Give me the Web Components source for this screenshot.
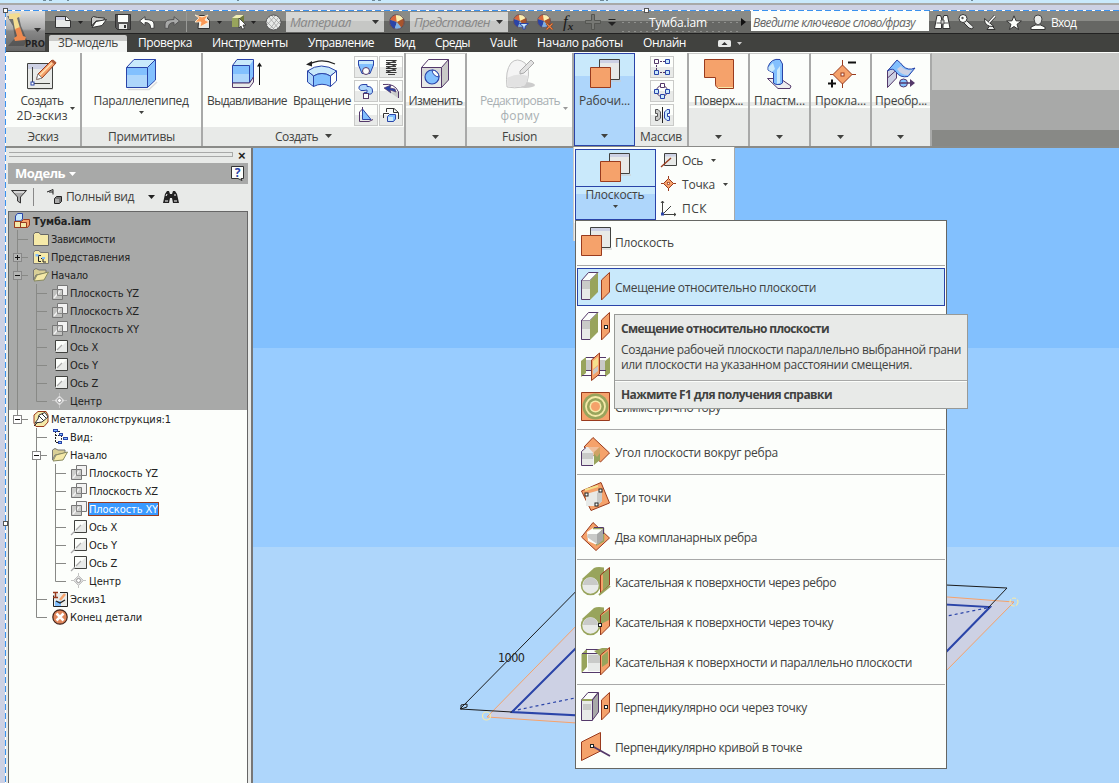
<!DOCTYPE html>
<html lang="ru">
<head>
<meta charset="utf-8">
<title>Тумба.iam</title>
<style>
html,body{margin:0;height:100%;overflow:hidden}
body{font:12px/15px "Open Sans","Noto Sans",sans-serif;color:#41423f;background:#cdd1e4}
</style>
</head>
<body>
<cad-app></cad-app>
<script>
const N='#2a44a8',P='#54396a',O='#f5a26b',B='#993b1e',G='#98a45c',L='#c9e9fb',M='#aed6fb',S='#82c0fe',W='#fcfefb',E='#e8eae8',C='#c9cac8',D='#41423f';

/* Icon library: name -> [width, height, markup] */
const ball=`<circle cx="7" cy="7" r="6.5" fill="#e9c56a"/><path d="M7 7L1 5A6.500 6.500 0 0 1 6 .6z" fill="#d9663a"/><path d="M7 7L6 .6A6.500 6.500 0 0 1 13 4z" fill="#fbeeb0"/><path d="M7 7L1 5A6.500 6.500 0 0 0 5 13.300z" fill="${N}"/><path d="M7 7L5 13.300A6.500 6.500 0 0 0 11 12z" fill="#7db0e8"/><path d="M7 7L11 12A6.500 6.500 0 0 0 13 4z" fill="#a8542c"/><circle cx="7" cy="7" r="6.500" fill="none" stroke="#5a4a5a" stroke-width=".8"/>`;
const cubeSide=`<path d="M1.500 9.500L8.500 1.500H18L10 9.500z" fill="${W}" stroke="${P}"/><path d="M10 9.500L18 1.500V21L10 29z" fill="${G}"/><path d="M1 9.500H10V29H1z" fill="${E}"/><path d="M2 10H10V18H2z" fill="${C}"/><path d="M10 28.500H1.500V9" fill="none" stroke="${P}"/>`;
const fin=`<path d="M21.500 9L29.500 1.500V21L21.500 29z" fill="${O}" stroke="${B}"/>`;
const dot=(x,y)=>`<rect x="${x-1.5}" y="${y-1.5}" width="3" height="3" fill="${W}" stroke="#222"/>`;
const cyl=`<path d="M2 13L14 2Q17 .5 24 1.500V18L16 27z" fill="${G}"/><circle cx="10.500" cy="19.500" r="9" fill="${E}" stroke="${G}" stroke-width="1.500"/><path d="M3 19a7.500 7.500 0 0 1 15 0z" fill="${C}"/>`;
const planes=`<path d="M12 23H32" stroke="#ccc"/><path d="M10.500 1.500H30.500V21.500H10.500z" fill="${E}" stroke="${D}"/><path d="M11 2H30V5H11z" fill="#cdd1e4"/><path d="M1.500 9.500H21.500V29.500H1.500z" fill="${O}" stroke="${B}"/>`;
const fold=c=>`<path d="M.5 14.500V3.500L2 1.500H6L7.500 3.500H15.500V14.500z" fill="#f5e9a8" stroke="${c}"/>`;
const I={
logo:[39,40,`<defs><linearGradient id="a" x2="0" y2="1"><stop stop-color="#ddd"/><stop offset=".45" stop-color="#aaa"/><stop offset=".5" stop-color="#888"/><stop offset="1" stop-color="#666"/></linearGradient></defs><path d="M0 0H39V40H0z" fill="url(#a)"/><path d="M1 5l6 10 2 12-7 8h16l3-6-6-14-2-9" fill="#4b4b4b" opacity=".7"/><path d="M3 3L13 2 15 5 11 7 14 17 9 19 7 8 3 8z" fill="#f3dc90"/><path d="M9 18l5-2 3 9 3 1-1 3-10 1-1-3 3-2z" fill="#ee8a50"/><path d="M28 17h7l-3.500 4z" fill="#333"/>`],
neu:[16,14,`<path d="M.5 1.500H11L15.500 5.500V12.500H.5z" fill="${E}" stroke="#333"/><path d="M1 2h9v3H1z" fill="#cdd1e4"/><path d="M10.500 1.500v4h5" fill="#fff" stroke="#333"/>`],
dn:[5,3,`<path d="M0 0H5L2.500 3z" fill="currentColor"/>`],
dn7:[7,4,`<path d="M0 0H7L3.500 4z" fill="currentColor"/>`],
open:[16,13,`<path d="M.5 10V2l2-1.500 4 1 7 .5-1 3H5z" fill="${C}" stroke="#333"/><path d="M1 11.500L5 5.500 15.500 3.500 11 9.500z" fill="${W}" stroke="#333"/>`],
save:[16,16,`<path d="M.5.5H15.500V15.500H2.500L.5 13.500z" fill="#555" stroke="#333"/><path d="M3 1h10v7H3z" fill="${W}"/><path d="M4 10h8v5H4z" fill="${E}"/><path d="M9 11h2v3H9z" fill="#333"/>`],
undo:[16,13,`<path d="M.5 5L6 .7V3.500Q15 3.500 15 8v4.300H11.500Q12 6.500 6 6.500V9.500z" fill="${W}" stroke="#444"/>`],
redo:[16,13,`<path d="M15.500 5L10 .7V3.500Q1 3.500 1 8v4.300H4.500Q4 6.500 10 6.500V9.500z" fill="#a8a9a8" stroke="#555"/>`],
upd:[17,16,`<path d="M5 1.500h6l4.500 5v8H4z" fill="${E}" stroke="#333"/><path d="M1 1L8 3 14 1 11 6l4 2-9 5 1-5-6 0 4-4z" fill="#fb9a58" stroke="#fff3d8" stroke-width=".8"/>`],
pick:[16,16,`<path d="M1 4L5 1H13L9 4z" fill="#f1edb4"/><path d="M1 4H9V13H1z" fill="#98a45c"/><path d="M9 4L13 1V10L9 13z" fill="#6f7a3c"/><path d="M8 4L15 11H12L13.500 14.500 11 15 10 12 8 14z" fill="#fff" stroke="#333" stroke-width=".8"/>`],
sph:[17,17,`<circle cx="8.500" cy="8.500" r="7.500" fill="${E}" stroke="#555"/><path d="M4 3L13 14M2 8L9 15M7 2L15 10M13 4L5 15M2 11L10 2M8 15L15 7" stroke="#999" stroke-width=".7"/>`],
ball:[16,16,`<g transform="scale(1.130)">${ball}</g>`],
ballf:[16,16,`${ball}<path d="M6.500 9.500H15.500L12 12.500V15H10V12.500z" fill="${L}" stroke="${N}"/>`],
ballx:[17,16,`${ball}<path d="M9.500 9.500L15.500 15.500M15.500 9.500L9.500 15.500" stroke="#5a3a2a" stroke-width="2.400"/><path d="M9.500 9.500L15.500 15.500M15.500 9.500L9.500 15.500" stroke="#f08040" stroke-width="1.300"/>`],
plus:[16,16,`<path d="M6.500 .5H9.500V6.500H15.500V9.500H9.500V15.500H6.500V9.500H.5V6.500H6.500z" fill="#777874" stroke="#555652"/>`],
cust:[8,7,`<path d="M.5.5H7.500" stroke="#222"/><path d="M0 3H8L4 7z" fill="#222"/>`],
rt:[5,8,`<path d="M0 0V8L5 4z" fill="#111"/>`],
bino:[17,16,`<path d="M.5 14.500L2.500 4 3 1.500H6.500L7.500 4V14.500zM9 14.500V4L10 1.500H13.500L14 4 16 14.500z" fill="${W}" stroke="#333"/><path d="M7 6h3v4H7zM2.500 9H7M10 9H14.500" fill="${C}" stroke="#555"/>`],
key:[17,16,`<path d="M8 6L15.500 13 14 15 11 14 6 9" fill="${E}" stroke="#333"/><circle cx="5" cy="4.500" r="4" fill="${W}" stroke="#333"/><circle cx="4.500" cy="4" r="1.200" fill="#555"/>`],
dish:[14,16,`<path d="M4 15.500H12L8 10z" fill="${E}" stroke="#333"/><path d="M1.500 4.500Q1 13 11 12.500z" fill="${W}" stroke="#333"/><path d="M6 8.500L12 2" stroke="#333" stroke-width="2.600"/><path d="M6 8.500L12 2" stroke="#fff" stroke-width="1.400"/>`],
star:[16,15,`<path d="M8 .8L10 5.800 15.400 6 11 9.300 12.600 14.500 8 11.500 3.400 14.500 5 9.300.6 6 6 5.800z" fill="${W}" stroke="#333"/>`],
user:[16,16,`<path d="M1 15.500V13L5.500 11H10.500L15 13V15.500z" fill="${W}" stroke="#333"/><path d="M4 5a4 4 0 0 1 8 0q0 5-4 6-4-1-4-6z" fill="${E}" stroke="#444"/>`],
min:[13,7,`<rect width="13" height="7" rx="1.500" fill="${E}"/><path d="M3.500 5H9.500L6.500 2z" fill="#333"/>`],
sketch:[32,32,`<path d="M2 31.500H27" stroke="#ddd"/><path d="M1.500 5.500H26.500V30.500H1.500z" fill="${E}" stroke="${D}"/><path d="M2 6h24v5H2z" fill="#cdd1e4"/><path d="M6.500 9V25.500H24" fill="none" stroke="${D}"/><rect x="5" y="24" width="3" height="3" fill="#fff" stroke="${N}"/><path d="M10.500 21.500L12 16 26 2 30 5 16 20z" fill="${O}" stroke="${B}"/><path d="M10.500 21.500L12 16 16 20z" fill="#fff" stroke="#888"/><path d="M25 3L27 1.500 30.500 4.500 28.500 6.500z" fill="#b05a3a"/><path d="M14 17L26 5" stroke="#ffe3b8" stroke-width="1.500"/>`],
box:[32,32,`<path d="M3 31.500H24L32 24" stroke="#ddd" fill="none" stroke-width="1.500"/><path d="M1.500 9.500L9 1.500H30.500L22.500 9.500z" fill="${L}"/><path d="M1.500 9.500H22.500V30H1.500z" fill="${M}"/><path d="M2 17H22V10H2z" fill="${S}"/><path d="M22.500 9.500L30.500 1.500V22L22.500 29.500z" fill="${S}"/><path d="M1.500 9.500L9 1.500H30.500V22L22.500 29.500H1.500zM1.500 9.500H22.500L30.500 1.500M22.500 9.500V29.500" fill="none" stroke="${N}"/>`],
extr:[32,32,`<path d="M1.500 7.500L6 1.500H22.500L18.500 7.500z" fill="${L}"/><path d="M1.500 7.500H18.500V25H1.500z" fill="${M}"/><path d="M2 8H18V16H2z" fill="${S}"/><path d="M18.500 7.500L22.500 1.500V19L18.500 25z" fill="${S}"/><path d="M1.500 25V7.500L6 1.500H22.500V19L18.500 25zM1.500 7.500H18.500V25" fill="none" stroke="${N}"/><path d="M1.500 25H18.500L22.500 19V24L18.500 29.500H1.500z" fill="${E}" stroke="${P}"/><path d="M28.500 27V6" stroke="#111"/><path d="M26 8.500L28.500 4.500 31 8.500z" fill="#111"/>`],
rev:[32,32,`<path d="M3 6.500Q15-.5 29 6" fill="none" stroke="#222" stroke-width="1.200"/><path d="M0 6.500L6 3V8.500z" fill="#222"/><path d="M1.500 13Q15 3 30.500 13L24.500 18Q16 13 7.500 18z" fill="${L}" stroke="${N}"/><path d="M1.500 13L7.500 18V28.500L1.500 24z" fill="${M}" stroke="${N}"/><path d="M7.500 18Q16 13 24.500 18V28.500Q16 24 7.500 28.500z" fill="${S}" stroke="${N}"/><path d="M24.500 18L30.500 13V23L24.500 28.500z" fill="${W}" stroke="${N}"/>`],
hole:[32,32,`<path d="M1.500 9.500L8.500 1.500H28.500L21.500 9.500z" fill="${W}"/><path d="M1.500 9.500H21.500V29.500H1.500z" fill="${E}"/><path d="M2 10H21V18H2z" fill="#d8d9d8"/><path d="M21.500 9.500L28.500 1.500V22L21.500 29.500z" fill="${C}"/><path d="M1.500 9.500H21.500V29.500H1.500zL8.500 1.500H28.500V22L21.500 29.500M21.500 9.500L28.500 1.500" fill="none" stroke="${P}"/><circle cx="12" cy="19" r="7" fill="${S}" stroke="${N}" stroke-width="1.200"/><path d="M12 12a7 7 0 0 1 7 7 8 8 0 0 1-7-7z" fill="${W}" stroke="${N}"/>`],
form:[32,32,`<ellipse cx="21" cy="27" rx="10" ry="3" fill="#ccc"/><path d="M3 29Q1 13 7 5 13-1 21 5 27 12 23 24 20 32 3 29z" fill="#f4f4f4" stroke="#c4c4c4"/><path d="M3 20Q14 14 24 18 23 26 20 28 10 30 4 28z" fill="#e2e2e2"/><path d="M16 13L27 2 30 5 20 15 16 16z" fill="#e2e2e2" stroke="#aaa"/>`],
planes:[32,32,planes],
patch:[32,32,`<path d="M1.500 1.500H30.500V30.500H16Q12 29 12.500 25V19.500H1.500z" fill="${O}" stroke="${B}"/><path d="M15 29.500H30" stroke="#f5e9a8"/>`],
plast:[30,32,`<path d="M2.500 20.500H15L26 28 25 30.500H13z" fill="#eee" stroke="${P}"/><path d="M3 9Q6 0 15 1.500L17.500 6V25L15 26.500Q10 27 8.500 25V15L3 12z" fill="${S}" stroke="${N}"/><path d="M3.500 9L8 5 10 11 7 14 3.500 12zM12 12L15 8V25L12 26z" fill="${L}"/>`],
gask:[32,32,`<path d="M17.500 2V30M5 16.500H31" stroke="${B}"/><path d="M17.500 7L27 16.500 17.500 26 8 16.500z" fill="${O}" stroke="${B}"/><rect x="16" y="15" width="3" height="3" fill="#fff" stroke="${B}"/><path d="M23 4.500H31M3 25.500H11M7 21.500V29.500" stroke="#111" stroke-width="2"/>`],
conv:[32,32,`<path d="M2.500 13L11.500 3V20L2.500 29.500z" fill="#cdd1e4" stroke="${P}"/><path d="M11.500 12L2.500 20" stroke="${P}" fill="none"/><path d="M2.500 13L12 2Q16 5 18 8 23 13 30 10L23 18.500Q15 20 11 14 8 9 2.500 13z" fill="${S}" stroke="${N}"/><path d="M16 8Q19 13 27 12L23 17Q16 17 12 11z" fill="#cdd1e4"/><circle cx="18.500" cy="25" r="4" fill="${S}" stroke="${P}"/><path d="M14 25H26" stroke="${P}" stroke-width="1.500"/><path d="M25 21V29L30 25z" fill="${P}"/>`],
loft:[16,16,`<path d="M.5 1.500H15.500V6L12 14.500H4L.5 6z" fill="${S}" stroke="${N}"/><path d="M1 2H15V5H1z" fill="${L}"/><circle cx="8" cy="12" r="3.500" fill="${W}" stroke="${P}"/>`],
coil:[16,16,`<path d="M3 1.500H13.500L3 5.500H13.500L3 9.500H13.500L3 13.500H13.500" fill="none" stroke="#333" stroke-width="1.100"/><path d="M3 3.500H13M3 7.500H13M3 11.500H13M5 15.500H12" stroke="#444"/>`],
sweep:[16,16,`<path d="M5 1.500Q.5 2 1 5.500 2 8.500 6 7.500L9 7V9.500Q4.500 9 5.500 12V14.500H10V11Q14.500 12 14.500 8 14.500 3 9 3.500V1.500z" fill="${M}" stroke="${N}"/><rect x="5.500" y="10.500" width="5" height="5" fill="${W}" stroke="${P}"/>`],
emb:[16,16,`<path d="M0 1.500Q12 0 15.500 9V15" stroke="${P}" fill="none"/><path d="M8 10L15 8V15z" fill="${C}"/><path d="M1 5L8 2 7 5 12 6 13 9 7 7 8 10z" fill="${N}" stroke="${P}" stroke-width=".7"/>`],
rib:[16,16,`<path d="M4.500 2L13 12.500H4.500z" fill="${S}" stroke="${N}"/><path d="M4.500 0V2L1.500 5V14.500H11L15 12.500" fill="none" stroke="${P}"/>`],
der:[16,16,`<path d="M3.500 5V1.500H11L15.500 5.500V12M.5 11V6.500H6" fill="none" stroke="#333"/><path d="M10.500 1.500V5.500H15" fill="none" stroke="#333"/><path d="M4.500 9.500L6.500 7.500H12.500V12L10.500 14.500H4.500z" fill="${S}" stroke="${N}"/><path d="M5 10H10V14H5z" fill="${L}"/>`],
prect:[16,16,`<path d="M3 2.500H13M2.500 3V13M3 13.500H13" stroke="${P}" stroke-dasharray="2 1"/><g fill="${L}" stroke="${N}"><path d="M11.500.5h4v4h-4zM.5 11.500h4v4H.5zM11.500 11.500h4v4h-4z"/></g><path d="M.5.5h4v4H.5z" fill="#fff" stroke="${P}"/>`],
pcirc:[16,16,`<circle cx="8" cy="8" r="5.500" fill="none" stroke="${P}"/><g fill="${L}" stroke="${N}"><path d="M.5 6.500h4v4h-4zM11.500 6.500h4v4h-4zM6.500 11.500h4v4h-4z"/></g><path d="M6.500.5h4v4h-4z" fill="#fff" stroke="${P}"/>`],
pmir:[16,16,`<path d="M8.500 0V16" stroke="#222"/><path d="M1.500 2.500H4L6.500 5V11L4 13.500H1.500V9.500H3.500V6.500H1.500z" fill="${C}" stroke="#555"/><path d="M15.500 2.500H13L10.500 5V11L13 13.500H15.500V9.500H13.500V6.500H15.500z" fill="${L}" stroke="${N}"/>`],
axis:[16,16,`<path d="M3.500 1.500H15.500V13.500H3.500z" fill="${E}" stroke="${D}"/><path d="M4 2h11v2.500H4z" fill="#cdd1e4"/><path d="M0 15L10 6" stroke="${B}" stroke-width="1.400"/>`],
point:[16,16,`<path d="M7.500 0V15M0 7.500H15" stroke="${B}"/><path d="M7.500 2.500L12.500 7.500 7.500 12.500 2.500 7.500z" fill="${O}" stroke="${B}"/><rect x="6.500" y="6.500" width="2" height="2" fill="#fff" stroke="${B}" stroke-width=".7"/>`],
ucs:[16,16,`<path d="M1.500 14V1M1.500 14.500H15M2 14L10 6M0 3L1.500 1 3 3M13 13L15 14.500 13 16" stroke="${D}" fill="none"/><rect x=".5" y="13" width="2" height="2" fill="${S}" stroke="${N}"/>`],
off:[32,32,cubeSide+fin],
par:[32,32,cubeSide+fin+dot(26,16)],
mid:[32,32,`<path d="M1 10L6 6V22L1 26zM25 10L30 6V22L25 26z" fill="${G}"/><path d="M6 6.500H26M2 24.500H26M6 19.500H26" stroke="${P}"/><path d="M6 9H25V19H6z" fill="${C}"/><path d="M11.500 9L19.500 2V23L11.500 29.500z" fill="${O}" stroke="${B}"/><path d="M13 10L18 6V14L13 18z" fill="#f5e08c"/><path d="M13 19L18 15V20L13 24z" fill="${C}"/>`],
torus:[32,32,`<path d="M1.500 1.500H29.500V29.500H1.500z" fill="${O}" stroke="${B}"/><circle cx="15.500" cy="15.500" r="13" fill="${G}"/><circle cx="15.500" cy="15.500" r="9.500" fill="none" stroke="#f5e9a8" stroke-width="1.800"/><circle cx="15.500" cy="15.500" r="6" fill="#f5e9a8"/><circle cx="15.500" cy="15.500" r="4.500" fill="${O}"/>`],
ang:[32,32,`<path d="M13 1.500L29.500 17 20.500 26 4 11z" fill="${O}" stroke="${B}"/><path d="M1 16L6 11H19L14 17z" fill="${E}"/><path d="M14 16L20 11V24L14 29z" fill="${G}"/><path d="M1.500 15.500H13.500V29.500H1.500z" fill="${E}"/><path d="M2 17H13V23H2z" fill="${C}"/><path d="M6 11.500L1.500 15.500V29.500H13" fill="none" stroke="${P}"/><path d="M8 11L17 21L20 17V11z" fill="${O}" opacity=".6"/>`],
three:[32,32,`<path d="M1.500 10L21 1.500 29.500 22 11 29.500z" fill="${O}" stroke="${B}"/><path d="M6 13L20 9 22 20 17 25H6z" fill="${E}"/><path d="M17 12L22 9V20L17 25z" fill="${C}"/><path d="M5 9L18 5" stroke="#f5e08c" stroke-width="2"/>${dot(6.5,13.5)+dot(20.5,9.5)+dot(16.5,23.5)}`],
two:[32,32,`<path d="M13 1.500L29.500 17 16 29.500 1.500 16z" fill="${O}" stroke="${B}"/><path d="M7 11L13 7H24L19 12 17 24 8 20z" fill="${W}"/><path d="M13 7.500H23.500V20L16 24" stroke="${G}" fill="none" stroke-width="1.500"/><path d="M17 13L23 8V19L17 24z" fill="#a8a9a8"/><path d="M8 13H17V23L7 16z" fill="${C}"/><path d="M14 6.500H23.500V13" stroke="${P}" fill="none"/>`],
tan1:[32,32,`${cyl}<path d="M20.500 9L29.500 1.500V19L20.500 27z" fill="${G}" stroke="${B}"/><path d="M21 10L23 8V24L21 26z" fill="${O}"/><path d="M19 29L30 20" stroke="${G}" stroke-width="2"/>`],
tan2:[32,32,`${cyl}<path d="M20.500 9L29.500 1.500V20L20.500 29z" fill="${O}" stroke="${B}"/><path d="M21 10L29 4V14L21 18z" fill="${G}"/>${dot(20,19)}`],
tan3:[32,32,`<path d="M1.500 8L7 2.500V21L1.500 27z" fill="${G}"/><path d="M6 3.500H24M2 7.500H20M2 26.500H20" stroke="${P}"/><path d="M8 8H22V25H8z" fill="${E}"/><path d="M8 9H22V17H8z" fill="${C}"/><path d="M14 5L22 2H28L20 10z" fill="${G}"/><path d="M20.500 9L29.500 1.500V20L20.500 29z" fill="${O}" stroke="${B}"/><path d="M22 10L28 5V17L22 21z" fill="${G}"/>`],
perp:[32,32,`<path d="M1.500 9L8 1.500H18L12 9z" fill="${W}" stroke="${P}"/><path d="M12.500 9L18.500 1.500V21L12.500 29z" fill="#a8a9a8" stroke="${P}"/><path d="M1.500 9.500H12.500V29.500H1.500z" fill="${E}" stroke="${P}"/><path d="M2 9H12" stroke="${G}" stroke-width="2"/><path d="M3 13H11V19H3z" fill="${C}"/>${fin+dot(26,16)}`],
curve:[32,32,`<path d="M1.500 11L20.500 1.500V20L1.500 29.500z" fill="${O}" stroke="${B}"/><path d="M12 15L30 25" stroke="${P}" stroke-width="1.800"/>${dot(12,15)}`],
help:[14,15,`<path d="M.5.500H12.500V12.500H10L11 14.500 7 12.500H.5z" fill="${W}" stroke="#333"/>`],
funnel:[17,16,`<path d="M.5 1.500H15.500L9.500 8V14L6.500 12V8z" fill="#aaa" stroke="#333"/><path d="M3 3H13" stroke="#fff"/>`],
view:[16,16,`<path d="M0 3L6 .5V5.500M2 3H6" fill="none" stroke="#222"/><path d="M7.500 9.500L9.500 7.500H14.500V12.500L12.500 14.500H7.500z" fill="#777" stroke="#222"/><path d="M8 10H12V14H8z" fill="#aaa"/>`],
find:[16,14,`<path d="M0 13L2 4 4 1H6L7 4H9L10 1H12L14 4 16 13H10L9 8H7L6 13z" fill="#222"/><path d="M2 11H5M11 11H14M3 6L4 4M12 4V6" stroke="#fff"/>`],
asm:[16,16,`<path d="M1.500 3L3.500.5H8.500V6L6.500 8H1.500z" fill="${L}" stroke="${N}"/><path d="M7.500 8.500L9.500 6.500H15.500V12L13.500 14.500H.5V8.500z" fill="${O}" stroke="${B}"/><path d="M.5 8.500H6.500V14.500H.5zM6.500 9.500H12.500V14.500H6.500z" fill="#f5e9a8" stroke="${B}"/>`],
fold:[16,16,fold('#666')],
rep:[16,16,fold('#777')+`<path d="M4 6.500H8M5.500 6.500V12.500H8M8 9.500H12M10 9.500V13H13" stroke="#222" fill="none"/><path d="M2.500 5h3v2.500h-3zM9 8h3v2H9z" fill="${S}"/>`],
fopen:[16,16,`<path d="M.5 13V3L3 1.500 6 3H13V6L3 8z" fill="#d9cf96" stroke="#777"/><path d="M1 14L4 8 15.500 5 11 13z" fill="#f5e9a8" stroke="#888a60"/>`],
pl:[16,16,`<path d="M5.500.5H15.500V10.500H5.500z" fill="#f2f2f2" stroke="#777"/><path d="M.5 4.500H10.500V14.500H.5z" fill="#c4c5c3" stroke="#777" fill-opacity=".85"/><path d="M2 13L8 6" stroke="#f2f2f2" stroke-width="1.500"/><path d="M5.500 4.500V10.500H10.500" stroke="#888" fill="none"/>`],
ax:[16,16,`<path d="M3.500 1.500H15.500V13.500H3.500z" fill="${E}" stroke="${D}"/><path d="M4 2H15L4 13z" fill="${W}"/><path d="M0 16L4 12M5 11L10 6" stroke="#aaa" stroke-width="1.300"/>`],
ct:[16,16,`<path d="M7.500 0V15M0 7.500H15" stroke="#c4c4c4"/><path d="M7.500 2.500L12.500 7.500 7.500 12.500 2.500 7.500z" fill="#ddd" stroke="#c0c0c0"/><circle cx="7.500" cy="7.500" r="2" fill="#fff" stroke="#999"/>`],
weld:[16,16,`<path d="M1 4L5 .5H13L15 4V11L11 15.500H3L1 12z" fill="#f5e9a8" stroke="${B}"/><path d="M2 12L5 8 6 4 12 1.500 15 6 9 11z" fill="#fff" stroke="#333"/><path d="M6 5L11 10M9 3L13 7M1 15L5 11" stroke="#333"/>`],
vid:[16,16,`<path d="M3.500 2V13.500H7M3 2.500H8M3 6.500H9M9.500 6V10.500H13" stroke="#222" fill="none" stroke-dasharray="2 1"/><path d="M1 0h5v3H1zM7 4h4v3H7zM11 8h5v3h-5zM6 12h4v3H6z" fill="${N}"/><path d="M2 1h3v1H2zM8 5h2v1H8zM12 9h3v1h-3zM7 13h2v1H7z" fill="${S}"/>`],
esk:[16,16,`<path d="M1.500 4.500V15.500H15.500V1.500H8" fill="${E}" stroke="#222"/><path d="M3 10h6v5H3z" fill="${S}"/><path d="M1 1.500h5M3.500 2V7M1 6.500h5" stroke="${B}" stroke-width="1.500"/><path d="M8 9L13 3" stroke="${O}" stroke-width="2.500"/><path d="M4 10L8 12 13 9" stroke="#222" fill="none" stroke-width="1.300"/>`],
end:[16,16,`<circle cx="8" cy="8" r="7.200" fill="#e0855a" stroke="#41231a" stroke-width="1.200"/><path d="M4.500 4.500L11.500 11.500M11.500 4.500L4.500 11.500" stroke="#fff" stroke-width="2.500"/>`]
};

/* Small helper that registers an element with a shadow template. */
function define(name,css,html,after){
  const t=document.createElement('template');
  customElements.define(name,class extends HTMLElement{
    constructor(){super();this.attachShadow({mode:'open'})}
    connectedCallback(){
      if(this.ready)return;this.ready=true;
      t.innerHTML=`<style>${css}</style>${typeof html==='function'?html(this):html}`;
      this.shadowRoot.append(document.importNode(t.content,true));
      if(after)after(this);
    }
  });
}
const ic=(n,st='')=>`<ui-icon name="${n}" style="${st}"></ui-icon>`;
const tx=(s,w,st='')=>`<fit-text w="${w}" style="${st}">${s}</fit-text>`;

define('ui-icon',':host{display:block;flex:none;line-height:0}svg{display:block;overflow:visible}',el=>{
  const [w,h,m]=I[el.getAttribute('name')];
  return `<svg width="${w}" height="${h}" viewBox="0 0 ${w} ${h}">${m}</svg>`;
});

/* Text run that is tracked to a given width. */
const runs=[];
define('fit-text',':host{display:block;flex:none;white-space:nowrap}span{display:inline-block;white-space:nowrap}','<span><slot></slot></span>',el=>{
  el.style.width=el.getAttribute('w')+'px';runs.push(el);
});
function track(el){
  const s=el.shadowRoot.querySelector('span');
  const n=el.textContent.length,w=+el.getAttribute('w');
  s.style.letterSpacing=((w-s.getBoundingClientRect().width)/n).toFixed(3)+'px';
}

define('top-edge',`:host{display:block;height:11px;background:linear-gradient(#c9e9fb 3px,#a8a9a8 3px 5px,#cdd1e4 5px)}
svg{display:block}`,`<svg width="1119" height="11"><path d="M43 .5h3M49 .5h3M67 .5h2M237 .5h2M372 .5h3M378 .5h3M600 .5h4M606 .5h2M971 .5h2" stroke="#6f8a98"/><path d="M6 10.500H1119" stroke="#fff" stroke-width="1"/><path d="M6 10.500H1119" stroke="#3a92ee" stroke-dasharray="6 3"/></svg>`);

define('title-bar',`:host{display:flex;height:22px;align-items:center;background:linear-gradient(#8a8b87 10px,#666764 10px);color:#222;border-bottom:1px solid #222}
.combo{box-sizing:border-box;height:20px;background:linear-gradient(#d6d7d5 9px,#c6c7c5 9px);display:flex;align-items:center;justify-content:space-between;padding:0 5px 0 4px;font-style:italic;font-size:13px;color:#888;flex:none}
.combo ui-icon{color:#333}.sep{width:1px;height:20px;background:#999a97}
.search{box-sizing:border-box;height:20px;background:#fcfefb;font-style:italic;color:#666;padding:4px 0 0 2px;flex:none;align-self:flex-start}
.fx{font:italic 17px/18px "Liberation Serif",serif;color:#1c1c1c;flex:none}.fx small{font-size:11px;font-weight:bold;position:relative;top:3px}
.title{flex:none;box-sizing:border-box;height:20px;padding:3px 0 0 29px;color:#fff;background:radial-gradient(circle,#8f908d .7px,transparent 1px) 0 6px/6px 9px}
.in{color:#fff}`,()=>{
  const items=[[55,16,ic('neu')],[78,5,ic('dn')],[91,16,ic('open')],[115,16,ic('save')],[139,16,ic('undo')],[164,16,ic('redo')],[186,1,'<div class="sep"></div>'],
  [194,17,ic('upd')],[217,5,ic('dn')],[231,16,ic('pick')],[251,5,ic('dn')],[265,17,ic('sph')],
  [286,98,`<div class="combo">${tx('Материал',61)+ic('dn7')}</div>`],[389,16,ic('ball')],[410,98,`<div class="combo">${tx('Представлен',76)+ic('dn7')}</div>`],
  [513,16,ic('ballf')],[537,17,ic('ballx')],[563,18,'<div class="fx">f<small>x</small></div>'],[585,16,ic('plus')],[608,8,ic('cust')],
  [620,120,`<div class="title">${tx('Тумба.iam',58)}</div>`],[741,5,ic('rt')],[751,178,`<div class="search">${tx('Введите ключевое слово/фразу',162)}</div>`],
  [934,17,ic('bino')],[958,17,ic('key')],[983,14,ic('dish')],[1006,16,ic('star')],[1030,16,ic('user')],[1051,26,`<div class="in">${tx('Вход',25)}</div>`]];
  let x=45;
  return items.map(([l,w,h])=>{const g=l-x;x=l+w;return h.replace(/^<(\S+)/,`<$1 data-g`).replace(/data-g( name="\w+")?( style="")?/,`$1 style="margin-left:${g}px;width:${w}px"`)}).join('');
});

define('tab-strip',`:host{display:flex;height:18px;background:#41423f;color:#fff;align-items:center;border-bottom:1px solid #fcfefb}
.tabs{display:flex;gap:20px;align-items:center;margin-top:-1px}
.on{box-sizing:border-box;width:78px;height:17px;margin-top:2px;padding:0 0 0 9px;margin-right:-9px;color:#41423f;background:linear-gradient(#c9cac8 6px,#f4f6f4 6px);border-radius:2px 2px 0 0}`,()=>`<div class="tabs"><div class="on">${tx('3D-модель',60)}</div>${[['Проверка',54],['Инструменты',76],['Управление',66],['Вид',21],['Среды',35],['Vault',27],['Начало работы',86],['Онлайн',43]].map(a=>tx(...a)).join('')}</div>${ic('min','margin-left:32px')}${ic('dn','margin-left:6px;color:#ccc')}`);

/* Ribbon panel: body slot plus optional titled footer. */
define('ribbon-panel',`:host{display:flex;flex-direction:column;box-sizing:border-box;height:93px;flex:none;border-right:2px solid #a8a9a8;background:#fcfefb;position:relative}
:host([fold]){border-top:1px solid #c9cac8;background:linear-gradient(#fcfefb 48px,#e8eae8 48px 52px,#fcfefb 52px 54px,#e8eae8 54px)}
:host([on]){border:1px solid ${N};background:linear-gradient(#c9e9fb 22px,#aed6fb 22px)}
.b{flex:1;display:flex;min-height:0}.f{height:18px;background:#e8eae8;display:flex;align-items:center;justify-content:center;gap:7px;padding-bottom:1px;margin-top:-1px}
:host([fold]) .f,:host([on]) .f{background:none;padding:2px 1px 0 0;margin-top:-2px}`,`<div class="b"><slot></slot></div><div class="f"><slot name="foot"></slot></div>`);

define('big-tool',`:host{display:flex;flex-direction:column;align-items:center;padding-top:5px;box-sizing:border-box}
.i{height:32px;margin-bottom:3px}`,`<div class="i"><slot name="icon"></slot></div><slot></slot>`);

define('mini-grid',`:host{display:grid;gap:2px 1px;grid-auto-rows:22px;align-content:start;padding-top:3px}
div{box-sizing:border-box;width:24px;border:1px solid #c9cac8;background:linear-gradient(#fcfefb 10px,#e8eae8 10px);display:grid;place-items:center}`,
el=>el.getAttribute('icons').split(' ').map(n=>`<div>${ic(n)}</div>`).join(''),el=>el.style.gridTemplateColumns=`repeat(${el.getAttribute('cols')},24px)`);

define('ribbon-bar',`:host{display:flex;height:93px;border-bottom:2px solid #8a8b88;background:linear-gradient(#c9cac8 37px,#a8a9a8 37px 77px,#888986 77px)}
big-tool{flex:none}`,()=>{
  const big=(i,w,h,st='',is='')=>`<big-tool style="width:${w}px;${st}"><ui-icon slot="icon" name="${i}" style="${is}"></ui-icon>${h}</big-tool>`;
  const fold=(i,w,t,tw,a='fold')=>`<ribbon-panel ${a} style="width:${w}px">${big(i,w-2,tx(t,tw),'margin-top:-1px')}<ui-icon slot="foot" name="dn7"></ui-icon></ribbon-panel>`;
  const foot=(t,w,x='')=>`<fit-text slot="foot" w="${w}">${t}</fit-text>${x}`;
  return `<ribbon-panel style="width:76px">${big('sketch',62,tx('Создать',43)+tx('2D-эскиз',51),'margin-left:5px')}${ic('dn','align-self:flex-start;margin:54px 0 0 -3px')}${foot('Эскиз',31)}</ribbon-panel>
<ribbon-panel style="width:121px">${big('box',118,tx('Параллелепипед',95)+ic('dn','margin-top:3px'))}${foot('Примитивы',67)}</ribbon-panel>
<ribbon-panel style="width:203px">${big('extr',88,tx('Выдавливание',80))}${big('rev',60,tx('Вращение',58),'margin-left:1px')}<mini-grid cols="2" icons="loft coil sweep emb rib der" style="margin-left:2px"></mini-grid>${foot('Создать',43,'<ui-icon slot="foot" name="dn7"></ui-icon>')}</ribbon-panel>
${fold('hole',61,'Изменить',54)}
<ribbon-panel style="width:107px">${big('form',106,tx('Редактировать',80,'color:#a9b0b3')+tx('форму',39,'color:#a9b0b3'))}${ic('dn','align-self:flex-start;margin:54px 0 0 -10px;color:#999')}${foot('Fusion',35)}</ribbon-panel>
${fold('planes',61,'Рабочи...',51,'on')}
<ribbon-panel style="width:54px"><mini-grid cols="1" icons="prect pcirc pmir" style="margin-left:15px"></mini-grid>${foot('Массив',42)}</ribbon-panel>
${fold('patch',61,'Поверх...',49)}${fold('plast',61,'Пластм...',51)}${fold('gask',61,'Прокла...',51)}${fold('conv',60,'Преобр...',52)}`;
});

define('tree-row',`:host{display:flex;height:18px;align-items:center;flex:none;font:11px/14px "DejaVu Sans Condensed","DejaVu Sans",sans-serif;font-stretch:condensed;color:#222}
svg{display:block;flex:none}.i{margin:0 2px 0 5px}.t{margin-top:2px}.s{background:#3a9aff;color:#fff;outline:1px solid ${B};height:12px;line-height:13px;margin-top:0}.b{font-weight:bold;margin-left:1px}`,el=>{
  const k=el.getAttribute('lines')||'',a=n=>el.getAttribute(n);
  // lines: v = vertical, t = tee, l = last, e = last with expander, + / - = expander, space = blank
  const cell=c=>{let d='';
    if(c==='v')d='M8.500 0V18';
    if(c==='t'||c==='+'||c==='-')d='M8.500 0V18M8.500 9.500H20';
    if(c==='l'||c==='e')d='M8.500 0V9.500H20';
    const box=c!==' '&&'+-e'.includes(c)?`<rect x="4.500" y="5.500" width="8" height="8" fill="${a('dark')!=null?'#b4b5b4':'#fff'}" stroke="#888"/><path d="M6 9.500H11${c==='+'?'M8.500 7V12':''}" stroke="#111"/>`:'';
    return `<svg width="19" height="18"><path d="${d}" fill="none" stroke="#888986"/>${box}</svg>`};
  return [...k].map(cell).join('')+`<ui-icon class="i" name="${a('icon')}"></ui-icon><fit-text class="t${a('sel')!=null?' s':''}${a('bold')!=null?' b':''}" w="${a('w')}">${a('label')}</fit-text>`;
});

define('model-browser',`:host{display:flex;flex-direction:column;box-sizing:border-box;width:247px;background:#e8eae8;border-right:2px solid #777;padding:3px 3px 0 2px;flex:none}
.grip{display:flex;height:12px;align-items:flex-start;gap:5px}.g{margin:1px 0 0 1px;width:223px;height:3px;border:1px solid #a8a9a8;border-left:0}
.x{font:bold 13px/9px "Liberation Sans",sans-serif;color:#222;width:9px}
.head{height:21px;background:#a8a9a8;color:#fff;display:flex;align-items:center;padding:0 3px 0 7px;gap:4px;font:bold 13px/19px "Open Sans",sans-serif;flex:none}
.q{margin-left:auto;display:grid}.q>*{grid-area:1/1}.q b{font:bold 12px/13px "Open Sans",sans-serif;color:${N};text-align:center;width:13px}
.bar{height:27px;box-sizing:border-box;padding:0 0 2px 3px;display:flex;align-items:center;flex:none}
.sep{width:1px;height:18px;background:#888;margin:0 13px 0 5px}
.tree{flex:1;border:1px solid #666;border-bottom:0;background:#fcfefb;min-height:0;overflow:hidden}
.dk{background:#a8a9a8}`,()=>{
  const r=(lines,icon,label,w,x='')=>`<tree-row lines="${lines}" icon="${icon}" label="${label}" w="${w}" ${x}></tree-row>`;
  const d='dark';
  return `<div class="grip"><div class="g"></div><div class="x">×</div></div>
<div class="head">${tx('Модель',50)}${ic('dn7')}<div class="q">${ic('help')}<b>?</b></div></div>
<div class="bar">${ic('funnel')}<div class="sep"></div>${ic('view')}${tx('Полный вид',68,'margin-left:3px')}${ic('dn7','margin:0 8px 0 14px;color:#222')}${ic('find')}</div>
<div class="tree"><div class="dk">${r('','asm','Тумба.iam',58,'bold')}${r('t','fold','Зависимости',64)}${r('+','rep','Представления',79,d)}${r('-','fopen','Начало',37,d)}
${r('vt','pl','Плоскость YZ',69)}${r('vt','pl','Плоскость XZ',69)}${r('vt','pl','Плоскость XY',69)}${r('vt','ax','Ось X',28)}${r('vt','ax','Ось Y',28)}${r('vt','ax','Ось Z',28)}${r('vl','ct','Центр',32)}</div>
${r('e','weld','Металлоконструкция:1',120)}${r(' t','vid','Вид:',23)}${r(' -','fopen','Начало',37)}
${r(' vt','pl','Плоскость YZ',69)}${r(' vt','pl','Плоскость XZ',69)}${r(' vt','pl','Плоскость XY',69,'sel')}${r(' vt','ax','Ось X',28)}${r(' vt','ax','Ось Y',28)}${r(' vt','ax','Ось Z',28)}${r(' vl','ct','Центр',32)}
${r(' t','esk','Эскиз1',36)}${r(' l','end','Конец детали',72)}</div>`;
});

define('model-view',`:host{display:block;flex:1;min-width:0;background:linear-gradient(${S} 200px,#98ccff 200px 399px,${M} 399px)}svg{display:block}
text{font:12.500px "DejaVu Sans Condensed","DejaVu Sans",sans-serif;font-stretch:condensed}`,`<svg width="866" height="635" viewBox="253 148 866 635" fill="none">
<path d="M487 717L628 573 1014 602 875 743z" fill="#cdd1e4" stroke="${O}"/>
<path d="M512 712L637 587 990 607 870 730z" stroke="${N}" stroke-width="2"/>
<path d="M512 711L575 698M987 608L947 616" stroke="${N}" stroke-dasharray="3 3" stroke-width="1.200"/>
<path d="M512 712L460 709 599 568 1007 588 988 608M461 709V705L467 704V707z" stroke="#1c1c1c"/>
<circle cx="486.500" cy="716" r="4" stroke="#f5e9a8" stroke-width="1.200"/><circle cx="1014" cy="602" r="4" stroke="#f5e9a8" stroke-width="1.200" stroke-dasharray="4 1.500"/>
<text x="498" y="662" textLength="27" fill="#222">1000</text></svg>`);

define('work-flyout',`:host{display:grid;grid-template-columns:81px 1fr;column-gap:5px;box-sizing:border-box;width:162px;height:94px;padding:2px 0 0 1px;background:linear-gradient(#fcfefb 76px,#e8eae8 76px);border-right:1px solid #a8a9a8;border-left:1px solid #c9cac8}
.big{box-sizing:border-box;height:71px;border:1px solid ${N};background:linear-gradient(${L} 36px,${N} 36px 37px,${L} 37px 44px,${M} 44px);display:flex;flex-direction:column;align-items:center;padding:2px 1px 0 0}
.side{display:grid;grid-auto-rows:24px;margin-top:-1px}.r{display:flex;align-items:center;gap:5px}`,()=>`<div class="big">${ic('planes')}${tx('Плоскость',59,'margin-top:3px')}${ic('dn','margin-top:3px')}</div>
<div class="side"><div class="r">${ic('axis')+tx('Ось',21)+ic('dn','margin-left:3px')}</div><div class="r">${ic('point')+tx('Точка',33)+ic('dn','margin-left:3px')}</div><div class="r">${ic('ucs')+tx('ПСК',25)}</div></div>`);

define('menu-row',`:host{display:flex;height:40px;align-items:center;padding-left:4px;box-sizing:border-box;gap:3px}
:host([hot]){height:38px;margin:1px 1px;padding-left:2px;border:1px solid ${N};background:${L}}`,el=>ic(el.getAttribute('icon'))+(el.hasAttribute('label')?tx(el.getAttribute('label'),el.getAttribute('w')):''));

define('plane-menu',`:host{display:block;box-sizing:border-box;width:372px;height:549px;border:1px solid #666764;background:#fcfefb;padding-top:1px}
hr{border:0;height:1px;margin:2px 1px;background:#a8a9a8}hr:first-of-type{margin:3px 1px 2px}`,()=>[['planes','Плоскость',59],0,['off','Смещение относительно плоскости',201,'hot'],['par'],['mid'],['torus','Симметрично тору',106],0,['ang','Угол плоскости вокруг ребра',163],0,['three','Три точки',56],['two','Два компланарных ребра',142],0,['tan1','Касательная к поверхности через ребро',221],['tan2','Касательная к поверхности через точку',218],['tan3','Касательная к поверхности и параллельно плоскости',297],0,['perp','Перпендикулярно оси через точку',192],['curve','Перпендикулярно кривой в точке',187]].map(r=>r?`<menu-row icon="${r[0]}" ${r[1]?`label="${r[1]}" w="${r[2]}"`:''} ${r[3]||''}></menu-row>`:'<hr>').join(''));

define('hint-box',`:host{display:block;box-sizing:border-box;width:354px;height:95px;border:1px solid #989a97;background:#e8eae8;padding:6px 0 0 6px}
.t{font-weight:bold}.p{margin-top:6px}.k{border-top:1px solid #a8a9a8;margin:8px 0 0 -6px;padding:6px 0 0 6px;font-weight:bold;box-shadow:inset 0 1px #fcfefb}`,()=>`<div class="t">${tx('Смещение относительно плоскости',208)}</div><div class="p">${tx('Создание рабочей плоскости параллельно выбранной грани',340)+tx('или плоскости на указанном расстоянии смещения.',291)}</div><div class="k">${tx('Нажмите F1 для получения справки',211)}</div>`);

define('cad-app',`:host{display:block;width:1119px;height:783px;overflow:hidden;position:relative}
.win{margin-left:6px;height:772px;display:flex;flex-direction:column}
.main{flex:1;display:flex;min-height:0}
title-bar{padding-left:39px}
.logo,.pro,.edge,.h,work-flyout,plane-menu,hint-box{position:absolute}
.logo{left:6px;top:11px}.pro{left:25px;top:39px;font:bold 8.500px/11px "DejaVu Sans",sans-serif;color:#222}
.edge{left:5px;top:11px;width:1px;height:772px;background:repeating-linear-gradient(#3a92ee 0 6px,#fff 6px 9px)}
.h{width:3px;height:3px;border:1px solid #555;background:#fff}
work-flyout{left:573px;top:147px}plane-menu{left:575px;top:220px}hint-box{left:614px;top:314px}
tab-strip{padding-left:43px}`,`<top-edge></top-edge><div class="win"><title-bar></title-bar><tab-strip></tab-strip><ribbon-bar></ribbon-bar><div class="main"><model-browser></model-browser><model-view></model-view></div></div>
<ui-icon class="logo" name="logo"></ui-icon><div class="pro">PRO</div><div class="edge"></div>
<div class="h" style="left:3px;top:8px"></div><div class="h" style="left:644px;top:8px"></div><div class="h" style="left:3px;top:521px"></div>
<work-flyout></work-flyout><plane-menu></plane-menu><hint-box></hint-box>`);
runs.forEach(track);
</script>
</body>
</html>
